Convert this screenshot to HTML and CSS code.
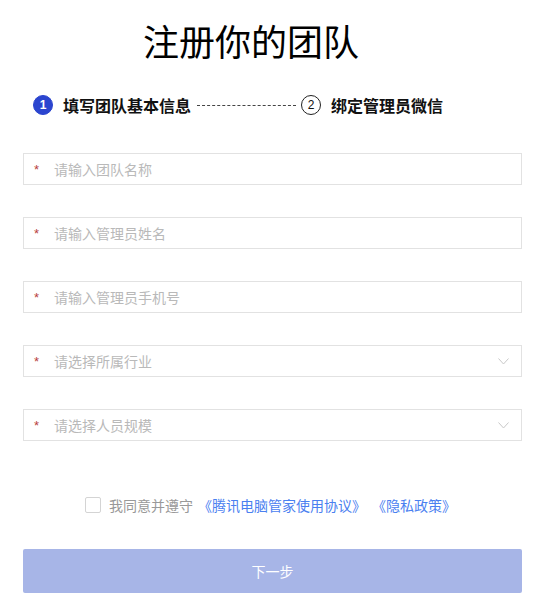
FILE: index.html
```html
<!DOCTYPE html>
<html lang="zh">
<head>
<meta charset="utf-8">
<title>注册你的团队</title>
<link rel="stylesheet" href="styles.css">
</head>
<body>
<div class="page">
  <h1 class="title">注册你的团队</h1>
  <div class="steps">
    <span class="step-num active">1</span>
    <span class="step-text">填写团队基本信息</span>
    <span class="step-line"></span>
    <span class="step-num">2</span>
    <span class="step-text">绑定管理员微信</span>
  </div>
  <div class="form">
    <div class="field"><span class="req">*</span><span class="ph">请输入团队名称</span></div>
    <div class="field"><span class="req">*</span><span class="ph">请输入管理员姓名</span></div>
    <div class="field"><span class="req">*</span><span class="ph">请输入管理员手机号</span></div>
    <div class="field"><span class="req">*</span><span class="ph">请选择所属行业</span>
      <svg class="chev" width="11" height="7" viewBox="0 0 11 7"><path d="M0.5 0.5 L5.5 6 L10.5 0.5" fill="none" stroke="#c8c8c8" stroke-width="1"/></svg></div>
    <div class="field"><span class="req">*</span><span class="ph">请选择人员规模</span>
      <svg class="chev" width="11" height="7" viewBox="0 0 11 7"><path d="M0.5 0.5 L5.5 6 L10.5 0.5" fill="none" stroke="#c8c8c8" stroke-width="1"/></svg></div>
  </div>
  <div class="agree">
    <span class="checkbox"></span>
    <span class="agree-text">我同意并遵守</span>
    <a class="link">《腾讯电脑管家使用协议》</a>
    <a class="link">《隐私政策》</a>
  </div>
  <button class="next">下一步</button>
</div>
</body>
</html>
```
FILE: styles.css
```css
html, body {
  margin: 0;
  padding: 0;
  background: #fff;
}
body {
  font-family: "Noto Sans CJK SC", "Noto Sans", sans-serif;
  color: #111;
}
.page {
  width: 499px;
  margin-left: 23px;
  padding-top: 14px;
}
.title {
  margin: 0 0 0 120px;
  font-size: 36px;
  font-weight: 400;
  line-height: 52px;
  color: #000;
}
.steps {
  display: flex;
  align-items: center;
  margin: 27px 0 0 10px;
  height: 24px;
}
.step-num {
  width: 18px;
  height: 18px;
  border-radius: 50%;
  border: 1px solid #222;
  display: flex;
  align-items: center;
  justify-content: center;
  font-size: 12px;
  line-height: 1;
  color: #111;
  font-family: "Liberation Sans", sans-serif;
}
.step-num.active {
  background: #2b45cf;
  border-color: #2b45cf;
  color: #fff;
  font-weight: 700;
}
.step-text {
  font-size: 16px;
  font-weight: 700;
  margin-left: 10px;
  color: #111;
}
.step-line {
  width: 99px;
  border-top: 1px dashed #444;
  margin: 0 5px 0 6px;
}
.form {
  margin-top: 36px;
  display: flex;
  flex-direction: column;
  gap: 32px;
}
.field {
  height: 32px;
  box-sizing: border-box;
  border: 1px solid #e2e2e2;
  display: flex;
  align-items: center;
  padding-left: 10px;
  padding-right: 12px;
}
.req {
  color: #b84040;
  font-size: 13px;
  width: 20px;
  font-family: "Liberation Sans", sans-serif;
}
.ph {
  color: #b9b9b9;
  font-size: 14px;
  flex: 1;
}
.chev {
  display: block;
}
.agree {
  margin-top: 54px;
  display: flex;
  align-items: center;
  padding-left: 62px;
  font-size: 14px;
  height: 20px;
}
.checkbox {
  width: 14px;
  height: 14px;
  border: 1px solid #d4d4d4;
  border-radius: 2px;
  margin-right: 8px;
}
.agree-text {
  color: #999;
  margin-right: 5px;
}
.link {
  color: #4a80f0;
  margin-right: 6px;
}
.next {
  display: block;
  width: 499px;
  height: 44px;
  margin-top: 34px;
  border: 0;
  border-radius: 2px;
  background: #a7b5e7;
  color: #fff;
  font-family: "Noto Sans CJK SC", sans-serif;
  font-size: 14px;
}
```
